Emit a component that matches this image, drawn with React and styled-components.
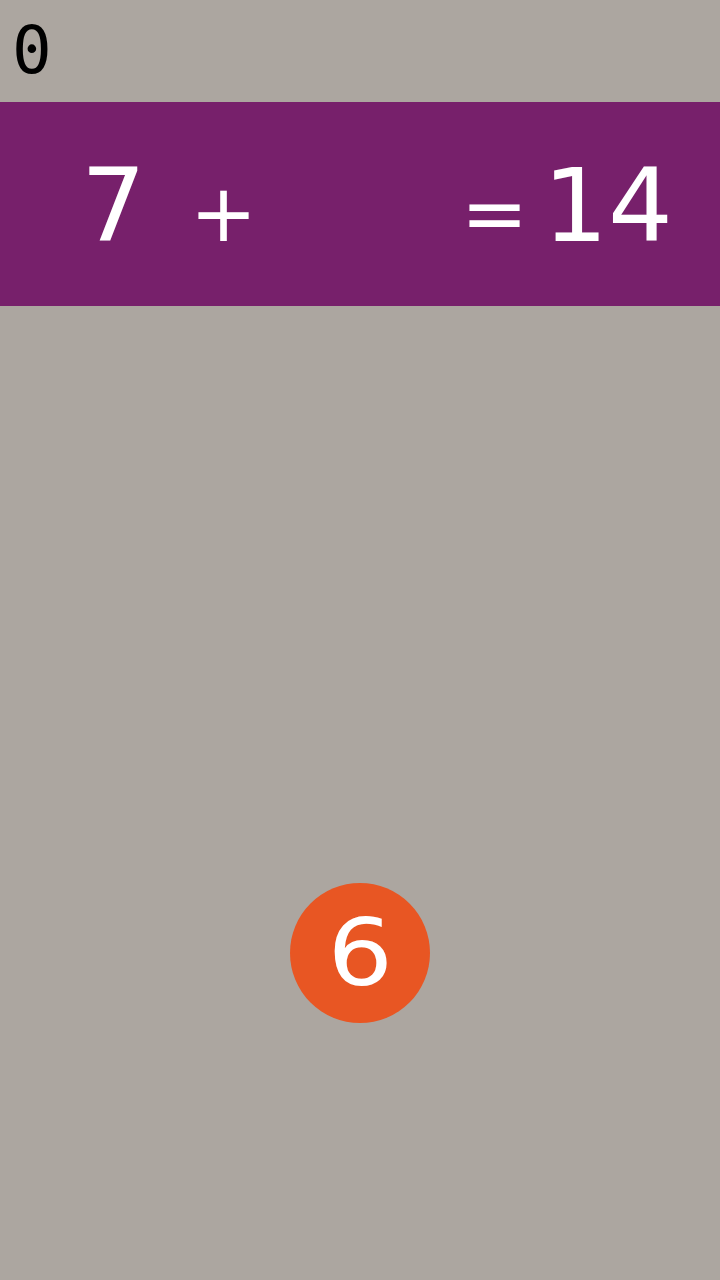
import React from "react";
import styled, { createGlobalStyle } from "styled-components";

const Global = createGlobalStyle`
  html, body {
    margin: 0;
    padding: 0;
    background: #aca6a0;
  }
`;

const Page = styled.div`
  width: 720px;
  height: 1280px;
  background: #aca6a0;
  display: flex;
  flex-direction: column;
`;

const ScoreBar = styled.div`
  height: 102px;
  padding-left: 12px;
  font-family: "DejaVu Sans Mono", monospace;
  font-size: 66px;
  line-height: 102px;
  color: #000;
  display: flex;
  align-items: center;
`;

const EquationBar = styled.div`
  box-sizing: border-box;
  height: 204px;
  padding-top: 53px;
  background: #77206b;
  display: grid;
  grid-template-columns: 81px 109px 271px 82px 1fr;
  align-items: baseline;
  font-family: "DejaVu Sans", sans-serif;
  color: #fff;
`;

const Term = styled.div`
  font-size: ${(p) => (p.op ? "80px" : "102px")};
  line-height: 1;
`;

const Field = styled.div`
  flex: 1;
  display: flex;
  justify-content: center;
  padding-top: 577px;
`;

const Ball = styled.div`
  width: 140px;
  height: 140px;
  border-radius: 50%;
  background: #e85623;
  color: #fff;
  display: flex;
  align-items: center;
  justify-content: center;
`;

const BallNumber = styled.span`
  font-family: "DejaVu Sans", sans-serif;
  font-size: 92px;
  line-height: 1;
  transform: scaleX(1.12);
  margin-top: 2px;
`;

const App = () => {
  const score = 0;
  const left = 7;
  const right = 14;
  const ball = 6;

  return (
    <Page>
      <Global />
      <ScoreBar>{score}</ScoreBar>
      <EquationBar>
        <span />
        <Term>{left}</Term>
        <Term op>+</Term>
        <Term op>=</Term>
        <Term>{right}</Term>
      </EquationBar>
      <Field>
        <Ball>
          <BallNumber>{ball}</BallNumber>
        </Ball>
      </Field>
    </Page>
  );
};

export default App;
